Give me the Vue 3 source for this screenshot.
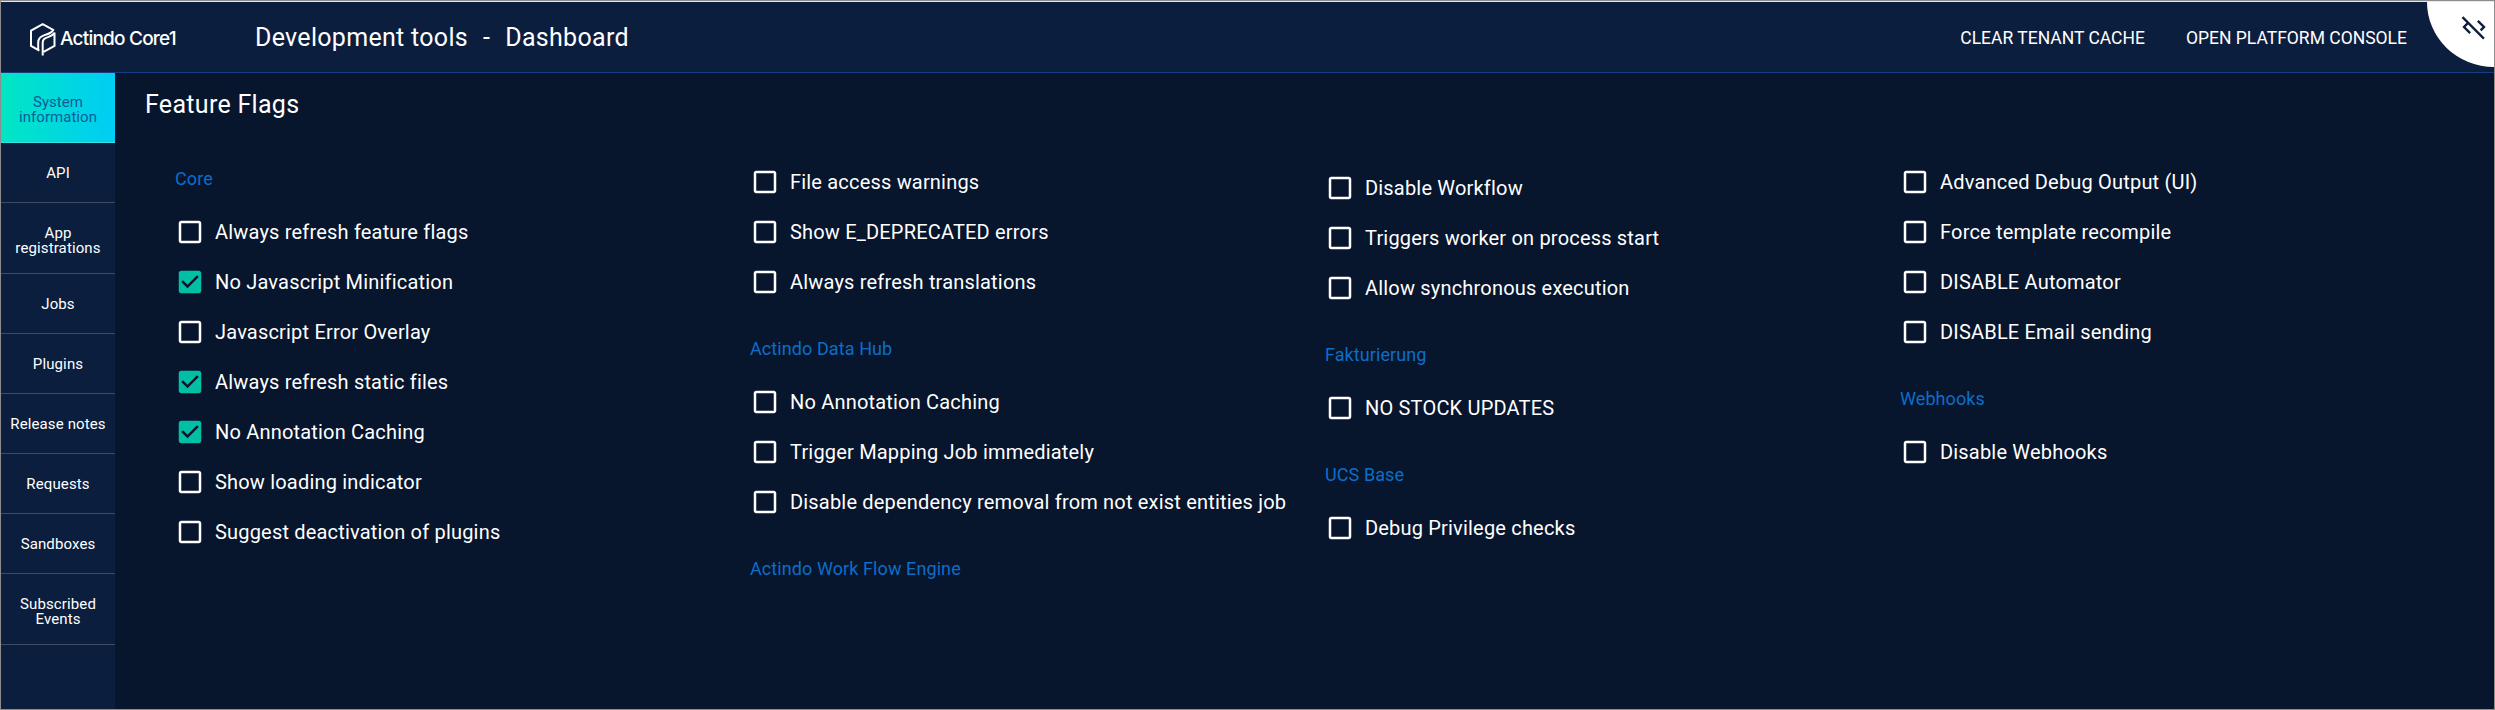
<script setup>
const nav = [
  { lines: ['System', 'information'], active: true },
  { lines: ['API'] },
  { lines: ['App', 'registrations'] },
  { lines: ['Jobs'] },
  { lines: ['Plugins'] },
  { lines: ['Release notes'] },
  { lines: ['Requests'] },
  { lines: ['Sandboxes'] },
  { lines: ['Subscribed', 'Events'] },
]

const flag = (label, checked = false) => ({ type: 'flag', label, checked })
const group = (label) => ({ type: 'group', label })

const columns = [
  [
    group('Core'),
    flag('Always refresh feature flags'),
    flag('No Javascript Minification', true),
    flag('Javascript Error Overlay'),
    flag('Always refresh static files', true),
    flag('No Annotation Caching', true),
    flag('Show loading indicator'),
    flag('Suggest deactivation of plugins'),
  ],
  [
    flag('File access warnings'),
    flag('Show E_DEPRECATED errors'),
    flag('Always refresh translations'),
    group('Actindo Data Hub'),
    flag('No Annotation Caching'),
    flag('Trigger Mapping Job immediately'),
    flag('Disable dependency removal from not exist entities job'),
    group('Actindo Work Flow Engine'),
  ],
  [
    flag('Disable Workflow'),
    flag('Triggers worker on process start'),
    flag('Allow synchronous execution'),
    group('Fakturierung'),
    flag('NO STOCK UPDATES'),
    group('UCS Base'),
    flag('Debug Privilege checks'),
  ],
  [
    flag('Advanced Debug Output (UI)'),
    flag('Force template recompile'),
    flag('DISABLE Automator'),
    flag('DISABLE Email sending'),
    group('Webhooks'),
    flag('Disable Webhooks'),
  ],
]
</script>

<template>
  <div class="app">
    <header class="topbar">
      <div class="brand">
        <svg class="brand-mark" viewBox="0 0 28 34" width="28" height="34">
          <g fill="none" stroke="#fff" stroke-width="2" stroke-linejoin="miter">
            <path d="M10.4 28.6 L2 23.8 V8.6 L13.7 2.1 L24.2 8 C22.8 11 19.6 11.8 16 12.9 C11.6 14.3 9.2 16.2 9.2 20.4 V28" />
            <path d="M13.7 33.6 V20.6 C13.7 17 15.8 16.2 19.6 14.9 C22.4 13.9 24.4 12.8 25.5 10.6 V23.8 L14.6 29.8" />
          </g>
        </svg>
        <span class="brand-name">Actindo Core1</span>
      </div>
      <h1 class="crumbs"><span>Development tools</span><span>-</span><span>Dashboard</span></h1>
      <div class="actions">
        <button class="action">CLEAR TENANT CACHE</button>
        <button class="action">OPEN PLATFORM CONSOLE</button>
      </div>
      <div class="corner">
        <svg viewBox="0 0 24 24" width="28" height="28">
          <path fill="#0c1e3e" d="M19.17 12l-4.58-4.59L16 6l6 6-3.59 3.59L17 14.17 19.17 12zM1.39 4.22l4.19 4.19L2 12l6 6 1.41-1.41L4.83 12 7 9.83l12.78 12.78 1.41-1.41L2.81 2.81 1.39 4.22z" />
        </svg>
      </div>
    </header>

    <div class="body">
      <nav class="sidebar">
        <a
          v-for="item in nav"
          :key="item.lines[0]"
          class="nav-item"
          :class="{ active: item.active, tall: item.lines.length > 1 }"
        >
          <span v-for="line in item.lines" :key="line">{{ line }}</span>
        </a>
      </nav>

      <main class="content">
        <h2 class="title">Feature Flags</h2>
        <div class="columns">
          <div v-for="(column, i) in columns" :key="i" class="column" :class="'column-' + (i + 1)">
            <template v-for="entry in column" :key="entry.label">
              <h3 v-if="entry.type === 'group'" class="group">{{ entry.label }}</h3>
              <label v-else class="flag">
                <svg viewBox="0 0 24 24" width="30" height="30">
                  <path
                    v-if="entry.checked"
                    fill="#00bfa5"
                    d="M19 3H5c-1.11 0-2 .9-2 2v14c0 1.1.89 2 2 2h14c1.11 0 2-.9 2-2V5c0-1.1-.89-2-2-2zm-9 14l-5-5 1.41-1.41L10 14.17l7.59-7.59L19 8l-9 9z"
                  />
                  <path
                    v-else
                    fill="#fff"
                    d="M19 5v14H5V5h14m0-2H5c-1.1 0-2 .9-2 2v14c0 1.1.9 2 2 2h14c1.1 0 2-.9 2-2V5c0-1.1-.9-2-2-2z"
                  />
                </svg>
                <span>{{ entry.label }}</span>
              </label>
            </template>
          </div>
        </div>
      </main>
    </div>
  </div>
</template>

<style>
body {
  margin: 0;
  background: #07152d;
}
</style>

<style scoped>
.app {
  box-sizing: border-box;
  width: 2495px;
  height: 710px;
  border: 1px solid #8c8c8c;
  display: flex;
  flex-direction: column;
  overflow: hidden;
  background: #07152d;
  color: #fff;
  font-family: Roboto, 'Liberation Sans', sans-serif;
}

.topbar {
  box-sizing: border-box;
  position: relative;
  flex: none;
  height: 72px;
  display: flex;
  align-items: center;
  border-top: 1px solid #e4e7ec;
  border-bottom: 1px solid #193c80;
  background: #0c1e3e;
}

.brand {
  width: 226px;
  margin-left: 28px;
  display: flex;
  align-items: center;
}

.brand-mark {
  margin-top: 4px;
}

.brand-name {
  margin: 3px 0 0 3px;
  font: 500 19px/24px Inter, Roboto, sans-serif;
  letter-spacing: -0.78px;
  white-space: nowrap;
}

.crumbs {
  margin: 2px 0 0;
  display: flex;
  gap: 15px;
  font-size: 25px;
  font-weight: 400;
  line-height: 40px;
  letter-spacing: 0.012em;
  white-space: nowrap;
}

.actions {
  margin-top: 2px;
  margin-left: auto;
  margin-right: 87px;
  display: flex;
  gap: 41px;
}

.action {
  padding: 0;
  border: 0;
  background: none;
  color: #fff;
  font: 400 17.5px/30px Roboto, sans-serif;
  white-space: nowrap;
}

.corner {
  position: absolute;
  top: 0;
  right: 0;
  width: 67px;
  height: 65px;
  border-bottom-left-radius: 67px 65px;
  background: #fff;
}

.corner svg {
  display: block;
  margin: 11px 0 0 33px;
}

.body {
  flex: 1;
  display: flex;
}

.sidebar {
  flex: none;
  width: 114px;
  background: #0c1e3e;
}

.nav-item {
  box-sizing: border-box;
  height: 60px;
  padding-top: 23px;
  display: flex;
  flex-direction: column;
  align-items: center;
  border-bottom: 1px solid #3d4b65;
  font-size: 15px;
  letter-spacing: 0.12px;
  line-height: 15px;
}

.nav-item.tall {
  height: 71px;
}

.nav-item.active {
  height: 70px;
  padding-top: 22px;
  border-bottom-color: #36e3e4;
  background: linear-gradient(90deg, #00e6c3, #00cdf5);
  color: #0b5c98;
  letter-spacing: 0.04px;
}

.content {
  flex: 1;
  padding-left: 30px;
}

.title {
  margin: 12px 0 0;
  font-size: 25px;
  font-weight: 400;
  line-height: 40px;
  letter-spacing: 0.012em;
}

.columns {
  margin: 12px 0 0 30px;
  display: grid;
  grid-template-columns: repeat(4, 575px);
}

.column {
  padding-top: 20px;
}

.column-1 {
  padding-top: 0;
}

.column-3 {
  padding-top: 26px;
}

.group {
  height: 70px;
  margin: 0;
  font-size: 18px;
  font-weight: 400;
  line-height: 84px;
  letter-spacing: 0.005em;
  color: #0c6ec8;
}

.flag {
  height: 50px;
  display: flex;
  align-items: center;
  gap: 10px;
  font-size: 20px;
  letter-spacing: 0.00938em;
  white-space: nowrap;
}
</style>
